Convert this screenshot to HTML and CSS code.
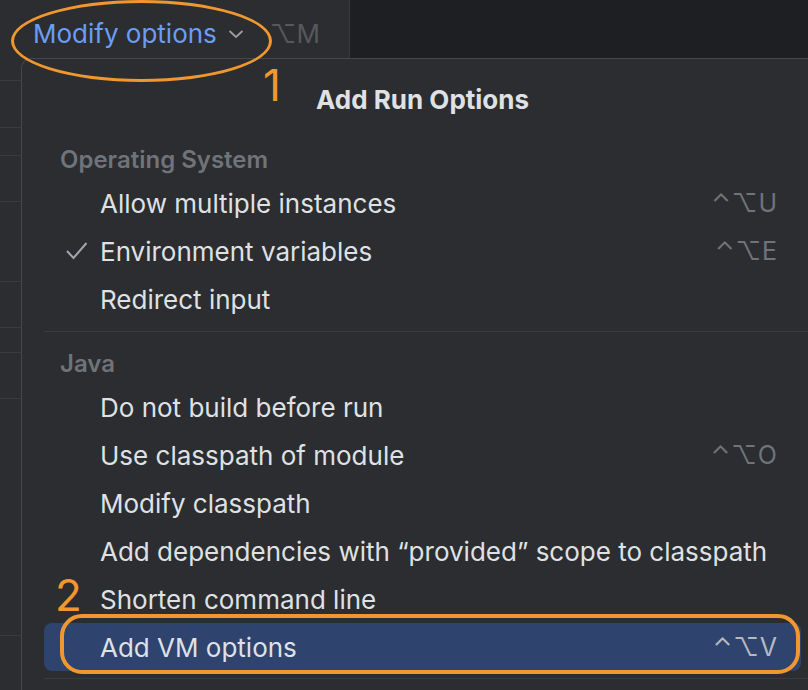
FILE: index.html
```html
<!DOCTYPE html>
<html>
<head>
<meta charset="utf-8">
<link rel="stylesheet" href="styles.css">
</head>
<body>
<div class="screen">
  <div class="topbar">
    <div class="toolbar-left">
      <span class="link">Modify options</span>
      <svg class="chev" width="16" height="10" viewBox="0 0 16 10"><polyline points="1.5,2 8,8 14.5,2" fill="none" stroke="#9a9da3" stroke-width="1.8"/></svg>
      <span class="hint">⌥M</span>
    </div>
    <div class="toolbar-right"></div>
  </div>
  <div class="main">
    <div class="gutter">
      <div class="g g1"></div>
      <div class="g g2"></div>
      <div class="g g3"></div>
      <div class="g g4"></div>
      <div class="g g5"></div>
      <div class="g g6"></div>
      <div class="g g7"></div>
      <div class="g g8"></div>
      <div class="g g9"></div>
    </div>
    <div class="popup">
      <div class="title">Add Run Options</div>
      <div class="header">Operating System</div>
      <div class="row"><span class="check"></span><span class="label">Allow multiple instances</span><span class="sc">⌃⌥U</span></div>
      <div class="row"><span class="check"><svg width="22" height="18" viewBox="0 0 22 18"><polyline points="1,9 7.5,16 20.5,1" fill="none" stroke="#a3a6ac" stroke-width="2"/></svg></span><span class="label">Environment variables</span><span class="sc">⌃⌥E</span></div>
      <div class="row"><span class="check"></span><span class="label">Redirect input</span></div>
      <div class="sep"></div>
      <div class="header java">Java</div>
      <div class="row"><span class="check"></span><span class="label">Do not build before run</span></div>
      <div class="row"><span class="check"></span><span class="label">Use classpath of module</span><span class="sc">⌃⌥O</span></div>
      <div class="row"><span class="check"></span><span class="label">Modify classpath</span></div>
      <div class="row"><span class="check"></span><span class="label">Add dependencies with “provided” scope to classpath</span></div>
      <div class="row"><span class="check"></span><span class="label">Shorten command line</span></div>
      <div class="row selected"><span class="check"></span><span class="label">Add VM options</span><span class="sc">⌃⌥V</span></div>
      <div class="sep bottom"></div>
    </div>
  </div>
  <div class="ring-ellipse"></div>
  <div class="ring-rect"></div>
  <div class="num num1">1</div>
  <div class="num num2">2</div>
</div>
</body>
</html>
```

FILE: styles.css
```css
html, body {
  margin: 0;
  padding: 0;
  background: #2b2d30;
}
.screen {
  position: relative;
  width: 808px;
  height: 690px;
  overflow: hidden;
  background: #2b2d30;
  font-family: Inter, "Noto Sans", sans-serif;
  color: #dfe1e5;
}
.topbar {
  display: flex;
  height: 58px;
}
.toolbar-left {
  width: 350px;
  display: flex;
  align-items: center;
  padding-left: 33px;
  padding-top: 9px;
  box-sizing: border-box;
  border-right: 1px solid #393b40;
  background: #2b2d30;
}
.link {
  font-size: 26px;
  color: #6b9cf6;
}
.chev {
  margin-left: 11px;
  margin-top: 1px;
}
.hint {
  margin-left: 26px;
  font-size: 26px;
  color: #55585e;
}
.toolbar-right {
  flex: 1;
  background: #1e1f22;
}
.main {
  display: flex;
  height: 632px;
}
.gutter {
  width: 21px;
  flex: none;
}
.g {
  border-bottom: 1px solid #393b40;
}
.g1 { height: 22px; }
.g2 { height: 46px; }
.g3 { height: 27px; }
.g4 { height: 45px; }
.g5 { height: 79px; }
.g6 { height: 45px; }
.g7 { height: 24px; }
.g8 { height: 45px; }
.g9 { height: 236px; }
.popup {
  flex: 1;
  border-top: 1px solid #45474c;
  border-left: 1px solid #45474c;
  border-top-left-radius: 10px;
  background: #2b2d30;
}
.title {
  height: 80px;
  display: flex;
  align-items: center;
  padding-left: 294px;
  font-size: 26px;
  font-weight: 700;
  color: #dfe1e5;
}
.header {
  height: 40px;
  display: flex;
  align-items: center;
  margin-left: 22px;
  padding-left: 16px;
  font-size: 24px;
  font-weight: 600;
  color: #6f737a;
}
.header.java {
  margin-top: 11px;
}
.row {
  height: 48px;
  display: flex;
  align-items: center;
  margin: 0 7px 0 22px;
  padding-right: 23px;
  font-size: 26px;
  border-radius: 8px;
  color: #dfe1e5;
}
.check {
  width: 35px;
  margin-left: 21px;
  flex: none;
  display: flex;
  align-items: center;
}
.check svg {
  margin-top: -1px;
  margin-left: 1px;
}
.label {
  white-space: nowrap;
}
.sc {
  margin-left: auto;
  color: #6f737a;
  font-size: 25px;
  letter-spacing: 1px;
}
.row.selected {
  background: #2e436e;
}
.row.selected .sc {
  color: #b5b9c0;
}
.sep {
  height: 1px;
  margin: 8px 0 0 22px;
  background: #393b40;
}
.sep.bottom {
  margin-top: 7px;
}
.ring-ellipse {
  position: absolute;
  left: 11px;
  top: 0px;
  width: 261px;
  height: 82px;
  box-sizing: border-box;
  border: 3.5px solid #f0982f;
  border-radius: 50%;
}
.ring-rect {
  position: absolute;
  left: 60px;
  top: 614px;
  width: 740px;
  height: 60px;
  box-sizing: border-box;
  border: 4px solid #f0982f;
  border-radius: 22px;
}
.num {
  position: absolute;
  font-family: Inter, sans-serif;
  font-size: 44px;
  font-weight: 400;
  color: #f0982f;
  line-height: 1;
}
.num1 {
  left: 263px;
  top: 63px;
}
.num2 {
  left: 55px;
  top: 573px;
}
```
